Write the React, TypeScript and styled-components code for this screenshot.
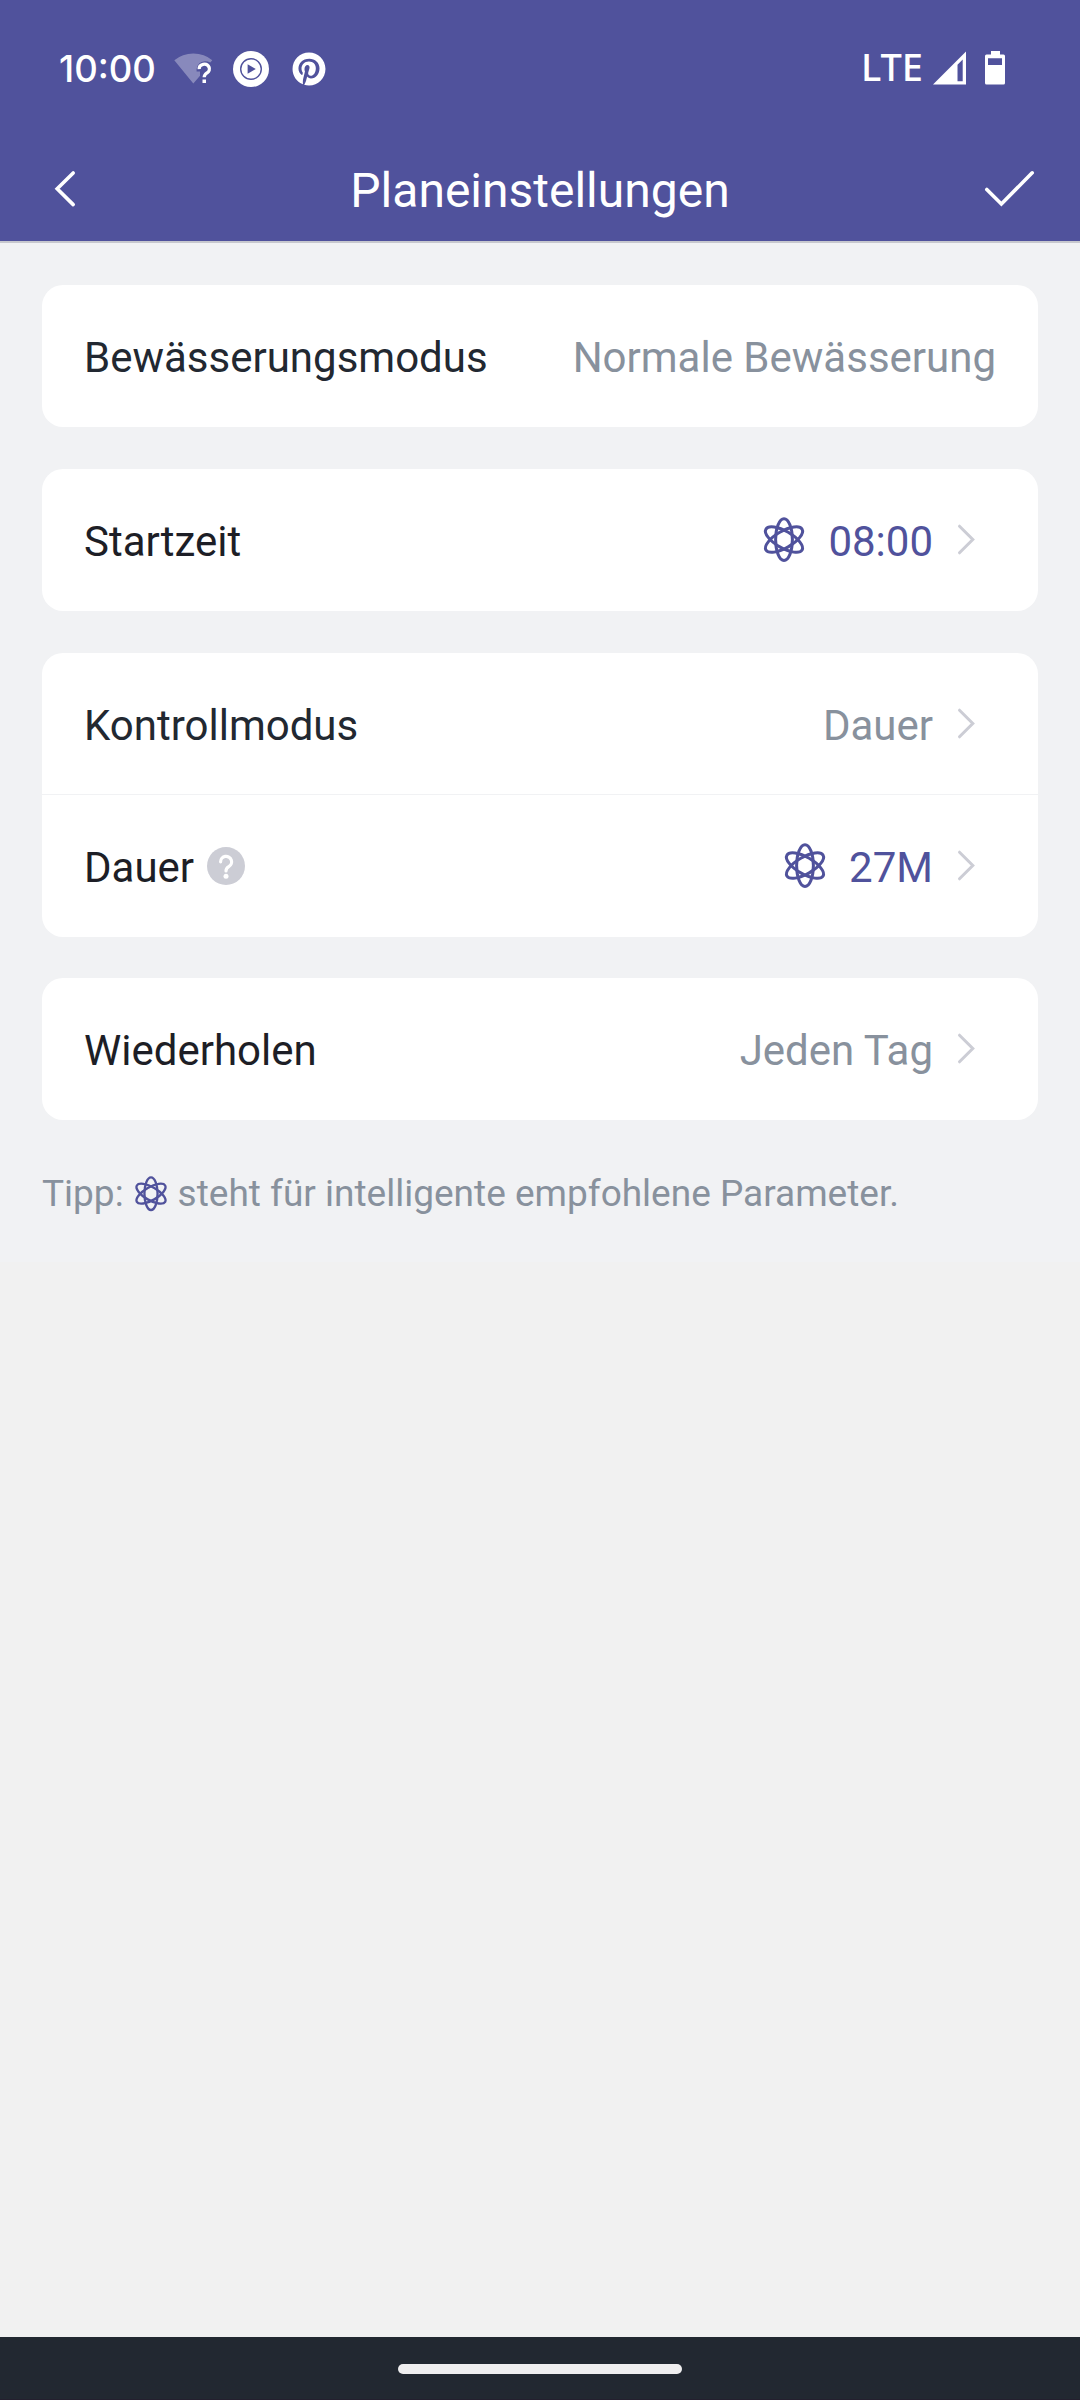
import React from "react";
import styled, { createGlobalStyle } from "styled-components";
import { FaPinterest } from "react-icons/fa";

const color = {
  brand: "#50529c",
  page: "#f1f2f4",
  rest: "#f1f1f1",
  ink: "#222831",
  inkDeep: "#1d1e26",
  muted: "#88919d",
  faint: "#cccdd5",
  nav: "#222831",
};

const GlobalStyle = createGlobalStyle`
  *, *::before, *::after { box-sizing: border-box; }
  body {
    margin: 0;
    background: ${color.rest};
    font-family: Roboto, "Liberation Sans", sans-serif;
  }
  svg { display: block; flex: none; }
`;

const Screen = styled.div`
  display: flex;
  flex-direction: column;
  width: 1080px;
  height: 2400px;
  overflow: hidden;
  background: ${color.rest};
`;

const StatusBar = styled.div`
  display: flex;
  justify-content: space-between;
  align-items: flex-start;
  height: 138px;
  padding: 48px 75px 0 59px;
  background: ${color.brand};
  color: #fff;
`;

const StatusGroup = styled.div<{ $lift?: number }>`
  display: flex;
  align-items: center;
  height: 42px;
  margin-top: ${(p) => -(p.$lift ?? 0)}px;
`;

const Clock = styled.span`
  width: 115px;
  padding-bottom: 1px;
  font-family: Inter, sans-serif;
  font-size: 36.5px;
  font-weight: 500;
  line-height: 42px;
  white-space: nowrap;
`;

const Network = styled.span`
  margin-right: 10px;
  padding-bottom: 5px;
  font-family: "Noto Sans", sans-serif;
  font-size: 38px;
  font-weight: 500;
  line-height: 42px;
`;

const IconSlot = styled.span<{ $before: number }>`
  display: flex;
  margin-left: ${(p) => p.$before}px;
`;

const TitleBar = styled.header`
  display: grid;
  grid-template-columns: 200px 1fr 200px;
  align-items: center;
  height: 105px;
  padding: 0 44px;
  background: ${color.brand};
  border-bottom: 2px solid #c7c8ce;
  color: #fff;
`;

const Title = styled.h1`
  margin: 0;
  padding-top: 2px;
  font-size: 48px;
  font-weight: 400;
  line-height: 56px;
  text-align: center;
  white-space: nowrap;
`;

const BarButton = styled.button<{ $end?: boolean }>`
  display: flex;
  justify-self: ${(p) => (p.$end ? "end" : "start")};
  padding: 0 0 2px;
  border: 0;
  background: none;
  color: inherit;
`;

const Content = styled.main`
  height: 1019px;
  padding: 42px 42px 0;
  background: ${color.page};
`;

const Card = styled.section<{ $gap?: number }>`
  margin-bottom: ${(p) => p.$gap ?? 42}px;
  border-radius: 21px;
  background: #fff;
  overflow: hidden;
`;

const Row = styled.div<{ $divided?: boolean }>`
  display: flex;
  align-items: center;
  justify-content: space-between;
  height: 142px;
  padding: 0 42px;
  box-shadow: ${(p) => (p.$divided ? `inset 0 -1px 0 ${color.page}` : "none")};
`;

const RowSide = styled.div`
  display: flex;
  align-items: center;
`;

const Label = styled.span<{ $deep?: boolean }>`
  padding-top: 3px;
  color: ${(p) => (p.$deep ? color.inkDeep : color.ink)};
  font-size: 42px;
  line-height: 50px;
  white-space: nowrap;
`;

const Value = styled(Label)<{ $smart?: boolean }>`
  color: ${(p) => (p.$smart ? color.brand : color.muted)};
`;

const Tip = styled.p`
  display: flex;
  align-items: center;
  height: 44px;
  margin: 52px 0 0;
  color: ${color.muted};
  font-size: 37px;
  line-height: 44px;
  white-space: nowrap;
`;

const TipIcon = styled.span`
  display: flex;
  margin: 0 9px;
`;

const Filler = styled.div`
  flex: 1;
`;

const NavBar = styled.footer`
  display: flex;
  justify-content: center;
  height: 63px;
  padding-top: 27px;
  background: ${color.nav};
  border-bottom: 1px solid #241f2e;
`;

const Handle = styled.div`
  width: 284px;
  height: 10px;
  border-radius: 5px;
  background: #efeeef;
`;

const Atom = ({ size = 46 }: { size?: number }) => (
  <svg width={size} height={size} viewBox="0 0 46 46" fill="none" stroke={color.brand} strokeWidth="3">
    {[0, 60, 120].map((angle) => (
      <ellipse key={angle} cx="23" cy="22.6" rx="8.4" ry="20.9" transform={`rotate(${angle} 23 22.6)`} />
    ))}
  </svg>
);

const Chevron = () => (
  <IconSlot $before={24}>
    <svg width="39" height="32" viewBox="0 0 39 32" fill="none" stroke={color.faint} strokeWidth="3" strokeLinecap="round">
      <path d="M2.5 2.2 L15.8 15.5 L2.5 28.8" />
    </svg>
  </IconSlot>
);

const Help = () => (
  <IconSlot $before={13}>
    <svg width="38" height="38" viewBox="0 0 38 38" fill="none">
      <circle cx="19" cy="19" r="19" fill={color.faint} />
      <path d="M13.6 14.8 a5.5 5.5 0 1 1 8.2 4.8 c-2 1.1 -2.8 1.9 -2.8 4.4" stroke="#fff" strokeWidth="3.2" strokeLinecap="round" />
      <circle cx="19" cy="29.2" r="2.5" fill="#fff" />
    </svg>
  </IconSlot>
);

const Wifi = () => (
  <svg width="40" height="34" viewBox="0 0 40 34" fill="none">
    <path d="M0.3 8.3 Q8.5 1.5 19.3 1.5 Q30.5 1.5 38.3 8.3 L36.3 10.6 Q33.8 9.2 31 9.2 Q23.4 9.6 22.6 17.3 L22.6 19.5 L26 19.5 L26 23.7 L19.3 31.5 Z" fill="#fff" fillOpacity="0.32" />
    <path d="M25.2 17.2 a5.1 4.7 0 1 1 7.9 3.6 c-2 1.5 -2.9 2.2 -2.9 4.4" stroke="#fff" strokeWidth="3.3" />
    <rect x="28.5" y="27.5" width="3.5" height="3.5" fill="#fff" />
  </svg>
);

const Play = () => (
  <svg width="36" height="36" viewBox="0 0 36 36">
    <circle cx="18" cy="18" r="18" fill="#fff" />
    <circle cx="18" cy="18" r="10.3" fill="none" stroke={color.brand} strokeWidth="1.4" />
    <path d="M14.6 13.2 L22.8 18 L14.6 22.8 Z" fill={color.brand} />
  </svg>
);

const Signal = () => (
  <svg width="33" height="34" viewBox="0 0 33 34" fill="#fff" fillRule="evenodd">
    <path d="M0 33.5 L33 0.5 V33.5 Z M24.5 13.8 V30.3 H29.7 V8.6 Z" />
  </svg>
);

const Battery = () => (
  <svg width="20" height="34" viewBox="0 0 20 34" fill="#fff" fillRule="evenodd">
    <path d="M6 0 H15 V3.5 H18.5 Q20 3.5 20 5 V32 Q20 33.5 18.5 33.5 H1.5 Q0 33.5 0 32 V5 Q0 3.5 1.5 3.5 H6 Z M3 7.3 V14 H17 V7.3 Z" />
  </svg>
);

type RowProps = {
  label: string;
  value: string;
  deep?: boolean;
  smart?: boolean;
  fixed?: boolean;
  help?: boolean;
  divided?: boolean;
};

const SettingRow = ({ label, value, deep, smart, fixed, help, divided }: RowProps) => (
  <Row $divided={divided}>
    <RowSide>
      <Label $deep={deep}>{label}</Label>
      {help && <Help />}
    </RowSide>
    <RowSide>
      {smart && <Atom />}
      <IconSlot $before={smart ? 21.5 : 0}>
        <Value $smart={smart}>{value}</Value>
      </IconSlot>
      {!fixed && <Chevron />}
    </RowSide>
  </Row>
);

export default function App() {
  return (
    <>
      <GlobalStyle />
      <Screen>
        <StatusBar>
          <StatusGroup>
            <Clock>10:00</Clock>
            <Wifi />
            <IconSlot $before={19}>
              <Play />
            </IconSlot>
            <IconSlot $before={23}>
              <FaPinterest size={34} />
            </IconSlot>
          </StatusGroup>
          <StatusGroup $lift={1}>
            <Network>LTE</Network>
            <Signal />
            <IconSlot $before={19}>
              <Battery />
            </IconSlot>
          </StatusGroup>
        </StatusBar>
        <TitleBar>
          <BarButton aria-label="Zurück">
            <svg width="40" height="40" viewBox="44 169 40 40" fill="none" stroke="#fff" strokeWidth="3.6" strokeLinecap="round">
              <path d="M73.2 173 L57.2 188.8 L73.2 204.6" />
            </svg>
          </BarButton>
          <Title>Planeinstellungen</Title>
          <BarButton $end aria-label="Speichern">
            <svg width="52" height="40" viewBox="984 169 52 40" fill="none" stroke="#fff" strokeWidth="3.6" strokeLinecap="round">
              <path d="M986.8 189.5 L1001.4 204 L1032.2 172.8" />
            </svg>
          </BarButton>
        </TitleBar>
        <Content>
          <Card>
            <SettingRow label="Bewässerungsmodus" value="Normale Bewässerung" fixed />
          </Card>
          <Card>
            <SettingRow label="Startzeit" value="08:00" deep smart />
          </Card>
          <Card $gap={41}>
            <SettingRow label="Kontrollmodus" value="Dauer" divided />
            <SettingRow label="Dauer" value="27M" deep smart help />
          </Card>
          <Card $gap={0}>
            <SettingRow label="Wiederholen" value="Jeden Tag" deep />
          </Card>
          <Tip>
            <span>Tipp:</span>
            <TipIcon>
              <Atom size={36} />
            </TipIcon>
            <span>steht für intelligente empfohlene Parameter.</span>
          </Tip>
        </Content>
        <Filler />
        <NavBar>
          <Handle />
        </NavBar>
      </Screen>
    </>
  );
}
